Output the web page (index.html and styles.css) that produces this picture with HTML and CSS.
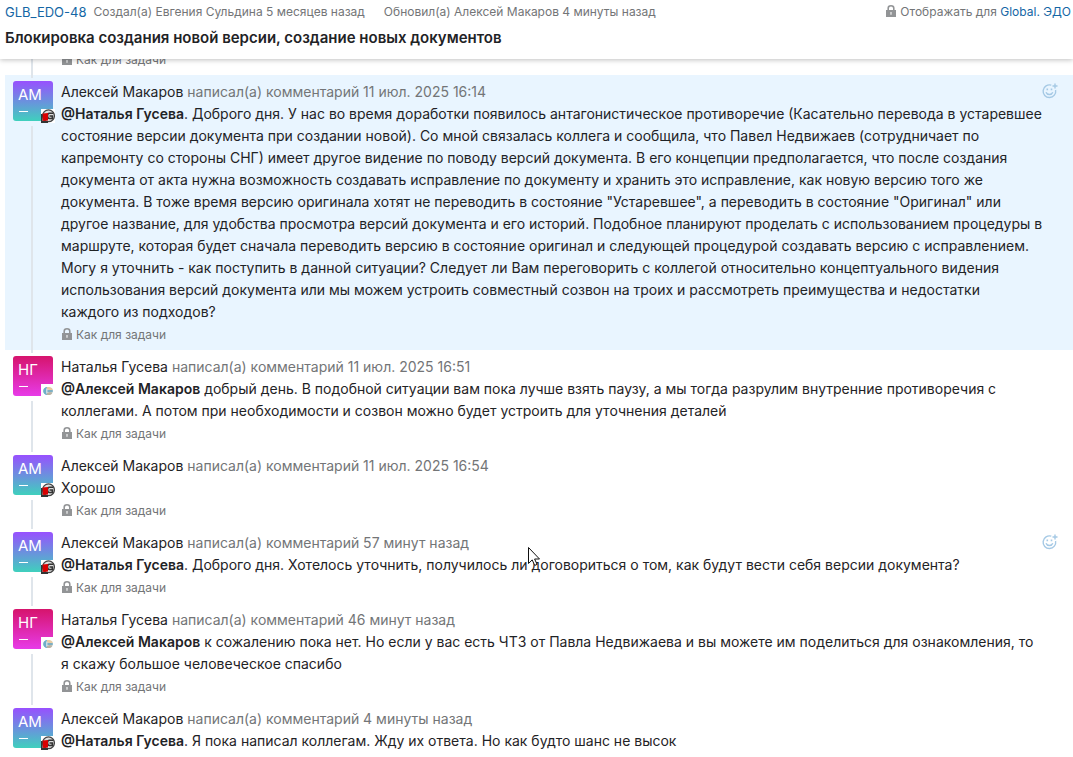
FILE: index.html
```html
<!DOCTYPE html>
<html lang="ru">
<head>
<meta charset="utf-8">
<meta name="viewport" content="width=device-width, initial-scale=1">
<title>GLB_EDO-48</title>
<link rel="stylesheet" href="styles.css">
</head>
<body>
<svg class="sprite" aria-hidden="true">
  <symbol id="lock" viewBox="0 0 10 12"><path d="M2.200 5V3.300a2.800 2.500 0 0 1 5.600 0V5" fill="none" stroke="currentColor" stroke-width="1.600"/><path fill="currentColor" d="M0 5h10v7H0z"/><path fill="#fff" fill-opacity=".75" d="M4.300 7h1.400v1.500l-.3 1.500h-.8l-.3-1.500z"/></symbol>
  <symbol id="smile" viewBox="0 0 16 16"><g fill="none" stroke="currentColor" stroke-width="1.400"><path d="M9.300 2.200A6.300 6.300 0 1 0 13.600 7"/><path d="M4 9.300c1.200 3 5.600 3 6.800 0"/><path d="M13 .5v5M10.500 3h5"/></g><path d="M4.500 5.500h1.600v1.700H4.500zM8.700 5.500h1.600v1.700H8.700z" fill="currentColor"/></symbol>
  <symbol id="badge-g" viewBox="0 0 14 14"><path fill="#fff" d="M0 0h14v14H0z"/><circle cx="7.500" cy="6.800" r="5.900" fill="#ddd" stroke="#444" stroke-width="1.300"/><path d="M12.500 4.300H8.500c-1.500 0-2 .8-2 2.500s.7 2.700 2 2.700h2.800V7H8.500" fill="none" stroke="#333" stroke-width="1.600"/><path fill="#d80000" d="M1.500 4.500 7 4v7.500L1.500 12z"/><path fill="#333" d="M0 12h7v2H0zM0 5h1.500v8H0z"/></symbol>
  <symbol id="badge-c" viewBox="0 0 14 14"><path fill="#fff" d="M0 0h14v14H0z"/><ellipse cx="7" cy="7" rx="4.800" ry="4" fill="#c9dce2"/><path d="M6.500 3C.8 3 .8 11 6.500 11L5 9V5z" fill="#6eadca"/><path d="M6 3c3.500-.4 5.500 1 5.800 3L9 6.200 6 5z" fill="#e8cba2"/><path d="M6 11c3 .4 5-.6 5.600-2.500L8.500 8 6 9z" fill="#b9b2a2"/><path fill="#5c9db7" d="M6.500 6.300h5.300v1.400H6.500z"/></symbol>
</svg>

<header class="issue-header">
  <div class="issue-meta">
    <a class="link issue-id" href="#">GLB_EDO-48</a>
    <span class="created">Создал(а) Евгения Сульдина 5 месяцев назад</span>
    <span>Обновил(а) Алексей Макаров 4 минуты назад</span>
    <span class="visibility"><svg class="lock"><use href="#lock"/></svg>Отображать для <a class="link" href="#">Global. ЭДО</a></span>
  </div>
  <h1 class="issue-title">Блокировка создания новой версии, создание новых документов</h1>
</header>

<main class="stream">
  <article class="comment comment-scrolled">
    <div class="rail"><span class="thread"></span></div>
    <div class="content"><footer class="scope"><svg class="lock"><use href="#lock"/></svg>Как для задачи</footer></div>
  </article>

  <article class="comment comment-selected">
    <div class="rail"><span class="thread-top"></span><div class="avatar violet">АМ<svg class="badge"><use href="#badge-g"/></svg></div><span class="thread"></span></div>
    <div class="content">
      <div class="byline"><span class="author">Алексей Макаров</span> написал(а) комментарий 11 июл. 2025 16:14<button class="react" type="button" aria-label="Добавить реакцию"><svg class="smile"><use href="#smile"/></svg></button></div>
      <p class="text"><b>@Наталья Гусева</b>. Доброго дня. У нас во время доработки появилось антагонистическое противоречие (Касательно перевода в устаревшее состояние версии документа при создании новой). Со мной связалась коллега и сообщила, что Павел Недвижаев (сотрудничает по капремонту со стороны СНГ) имеет другое видение по поводу версий документа. В его концепции предполагается, что после создания документа от акта нужна возможность создавать исправление по документу и хранить это исправление, как новую версию того же документа. В тоже время версию оригинала хотят не переводить в состояние "Устаревшее", а переводить в состояние "Оригинал" или другое название, для удобства просмотра версий документа и его историй. Подобное планируют проделать с использованием процедуры в маршруте, которая будет сначала переводить версию в состояние оригинал и следующей процедурой создавать версию с исправлением. Могу я уточнить - как поступить в данной ситуации? Следует ли Вам переговорить с коллегой относительно концептуального видения использования версий документа или мы можем устроить совместный созвон на троих и рассмотреть преимущества и недостатки каждого&nbsp;из подходов?</p>
      <footer class="scope"><svg class="lock"><use href="#lock"/></svg>Как для задачи</footer>
    </div>
  </article>

  <article class="comment">
    <div class="rail"><span class="thread-top"></span><div class="avatar pink">НГ<svg class="badge"><use href="#badge-c"/></svg></div><span class="thread"></span></div>
    <div class="content">
      <div class="byline"><span class="author">Наталья Гусева</span> написал(а) комментарий 11 июл. 2025 16:51</div>
      <p class="text"><b>@Алексей Макаров</b> добрый день. В подобной ситуации вам пока лучше взять паузу, а мы тогда разрулим внутренние противоречия с коллегами. А потом при необходимости и созвон можно будет устроить для уточнения деталей</p>
      <footer class="scope"><svg class="lock"><use href="#lock"/></svg>Как для задачи</footer>
    </div>
  </article>

  <article class="comment">
    <div class="rail"><span class="thread-top"></span><div class="avatar violet">АМ<svg class="badge"><use href="#badge-g"/></svg></div><span class="thread"></span></div>
    <div class="content">
      <div class="byline"><span class="author">Алексей Макаров</span> написал(а) комментарий 11 июл. 2025 16:54</div>
      <p class="text">Хорошо</p>
      <footer class="scope"><svg class="lock"><use href="#lock"/></svg>Как для задачи</footer>
    </div>
  </article>

  <article class="comment">
    <div class="rail"><span class="thread-top"></span><div class="avatar violet">АМ<svg class="badge"><use href="#badge-g"/></svg></div><span class="thread"></span></div>
    <div class="content">
      <div class="byline"><span class="author">Алексей Макаров</span> написал(а) комментарий 57 минут назад<button class="react" type="button" aria-label="Добавить реакцию"><svg class="smile"><use href="#smile"/></svg></button></div>
      <p class="text"><b>@Наталья Гусева</b>. Доброго дня. Хотелось уточнить, получилось ли договориться о том, как будут вести себя версии документа?</p>
      <footer class="scope"><svg class="lock"><use href="#lock"/></svg>Как для задачи</footer>
    </div>
  </article>

  <article class="comment">
    <div class="rail"><span class="thread-top"></span><div class="avatar pink">НГ<svg class="badge"><use href="#badge-c"/></svg></div><span class="thread"></span></div>
    <div class="content">
      <div class="byline"><span class="author">Наталья Гусева</span> написал(а) комментарий 46 минут назад</div>
      <p class="text"><b>@Алексей Макаров</b> к сожалению пока нет. Но если у вас есть ЧТЗ от Павла Недвижаева и вы можете им поделиться для ознакомления, то я скажу большое человеческое спасибо</p>
      <footer class="scope"><svg class="lock"><use href="#lock"/></svg>Как для задачи</footer>
    </div>
  </article>

  <article class="comment">
    <div class="rail"><span class="thread-top"></span><div class="avatar violet">АМ<svg class="badge"><use href="#badge-g"/></svg></div></div>
    <div class="content">
      <div class="byline"><span class="author">Алексей Макаров</span> написал(а) комментарий 4 минуты назад</div>
      <p class="text"><b>@Наталья Гусева</b>. Я пока написал коллегам. Жду их ответа. Но как будто шанс не высок</p>
    </div>
  </article>
</main>

<svg class="cursor" viewBox="0 0 12 19" aria-hidden="true"><path d="M.5.5v16l3.700-3.600 2.500 5.500 2.400-1-2.500-5.400h4.900z" fill="#fff" stroke="#111"/></svg>
</body>
</html>
```
FILE: styles.css
```css
* {
  box-sizing: border-box;
}

body {
  margin: 0;
  background: #fff;
  color: #1f2326;
  font: 14px/22px Inter, "Noto Sans", sans-serif;
}

.sprite {
  position: absolute;
  width: 0;
  height: 0;
}

.link {
  color: #1466a5;
  text-decoration: none;
}

.issue-header {
  position: sticky;
  top: 0;
  z-index: 2;
  padding: 2px 2px 10px 5px;
  background: #fff;
  box-shadow: 0 1px 5px rgba(0, 0, 0, 0.25);
}

.issue-meta {
  display: flex;
  align-items: center;
  color: #737577;
  font-size: 12px;
  line-height: 20px;
}

.issue-id {
  margin-right: 7px;
  font-size: 13px;
}

.created {
  margin-right: 19px;
}

.visibility {
  margin-left: auto;
}

.issue-title {
  margin: 5px 0 0;
  font-size: 15px;
  font-weight: 600;
  line-height: 22px;
}

.lock {
  width: 10px;
  height: 12px;
  margin-right: 4px;
  color: #929496;
  vertical-align: -1px;
}

.stream {
  padding-left: 5px;
}

.comment {
  display: flex;
  gap: 8px;
  padding-left: 8px;
}

.comment-scrolled {
  margin-top: -11px;
}

.comment-scrolled .content {
  padding-top: 0;
}

.comment-selected {
  background: #e9f5ff;
}

.rail {
  display: flex;
  flex: none;
  flex-direction: column;
  align-items: center;
  width: 40px;
}

.thread-top,
.thread {
  width: 2px;
  margin-right: 2px;
  background: #dfe5eb;
}

.thread-top {
  height: 3px;
  margin-bottom: 3px;
}

.thread {
  flex: 1;
}

.avatar + .thread {
  margin-top: 5px;
}

.avatar {
  position: relative;
  width: 40px;
  height: 40px;
  padding: 3px 5px;
  border-radius: 3px;
  color: #fff;
  font-size: 15px;
}

.avatar::after {
  position: absolute;
  bottom: 9px;
  left: 6px;
  width: 9px;
  height: 1px;
  background: #fff;
  content: "";
}

.violet {
  background: linear-gradient(#9850ff, #3fd0bd);
}

.pink {
  background: linear-gradient(#d6146c, #e73be8);
}

.badge {
  position: absolute;
  right: -2px;
  bottom: -2px;
  width: 14px;
  height: 14px;
}

.content {
  flex: 1;
  min-width: 0;
  padding: 6px 28px 3px 0;
}

.byline {
  position: relative;
  color: #737577;
}

.author {
  color: #1f2326;
}

.text {
  margin: 0;
}

.text b {
  font-weight: 600;
}

.react {
  position: absolute;
  top: 2px;
  right: -13px;
  display: flex;
  padding: 0;
  border: 0;
  background: none;
  color: #a5c9e5;
}

.smile {
  width: 16px;
  height: 16px;
}

.scope {
  padding-left: 1px;
  color: #737577;
  font-size: 12px;
  line-height: 24px;
}

.cursor {
  position: absolute;
  top: 547px;
  left: 528px;
  z-index: 3;
  width: 12px;
  height: 19px;
}
```
